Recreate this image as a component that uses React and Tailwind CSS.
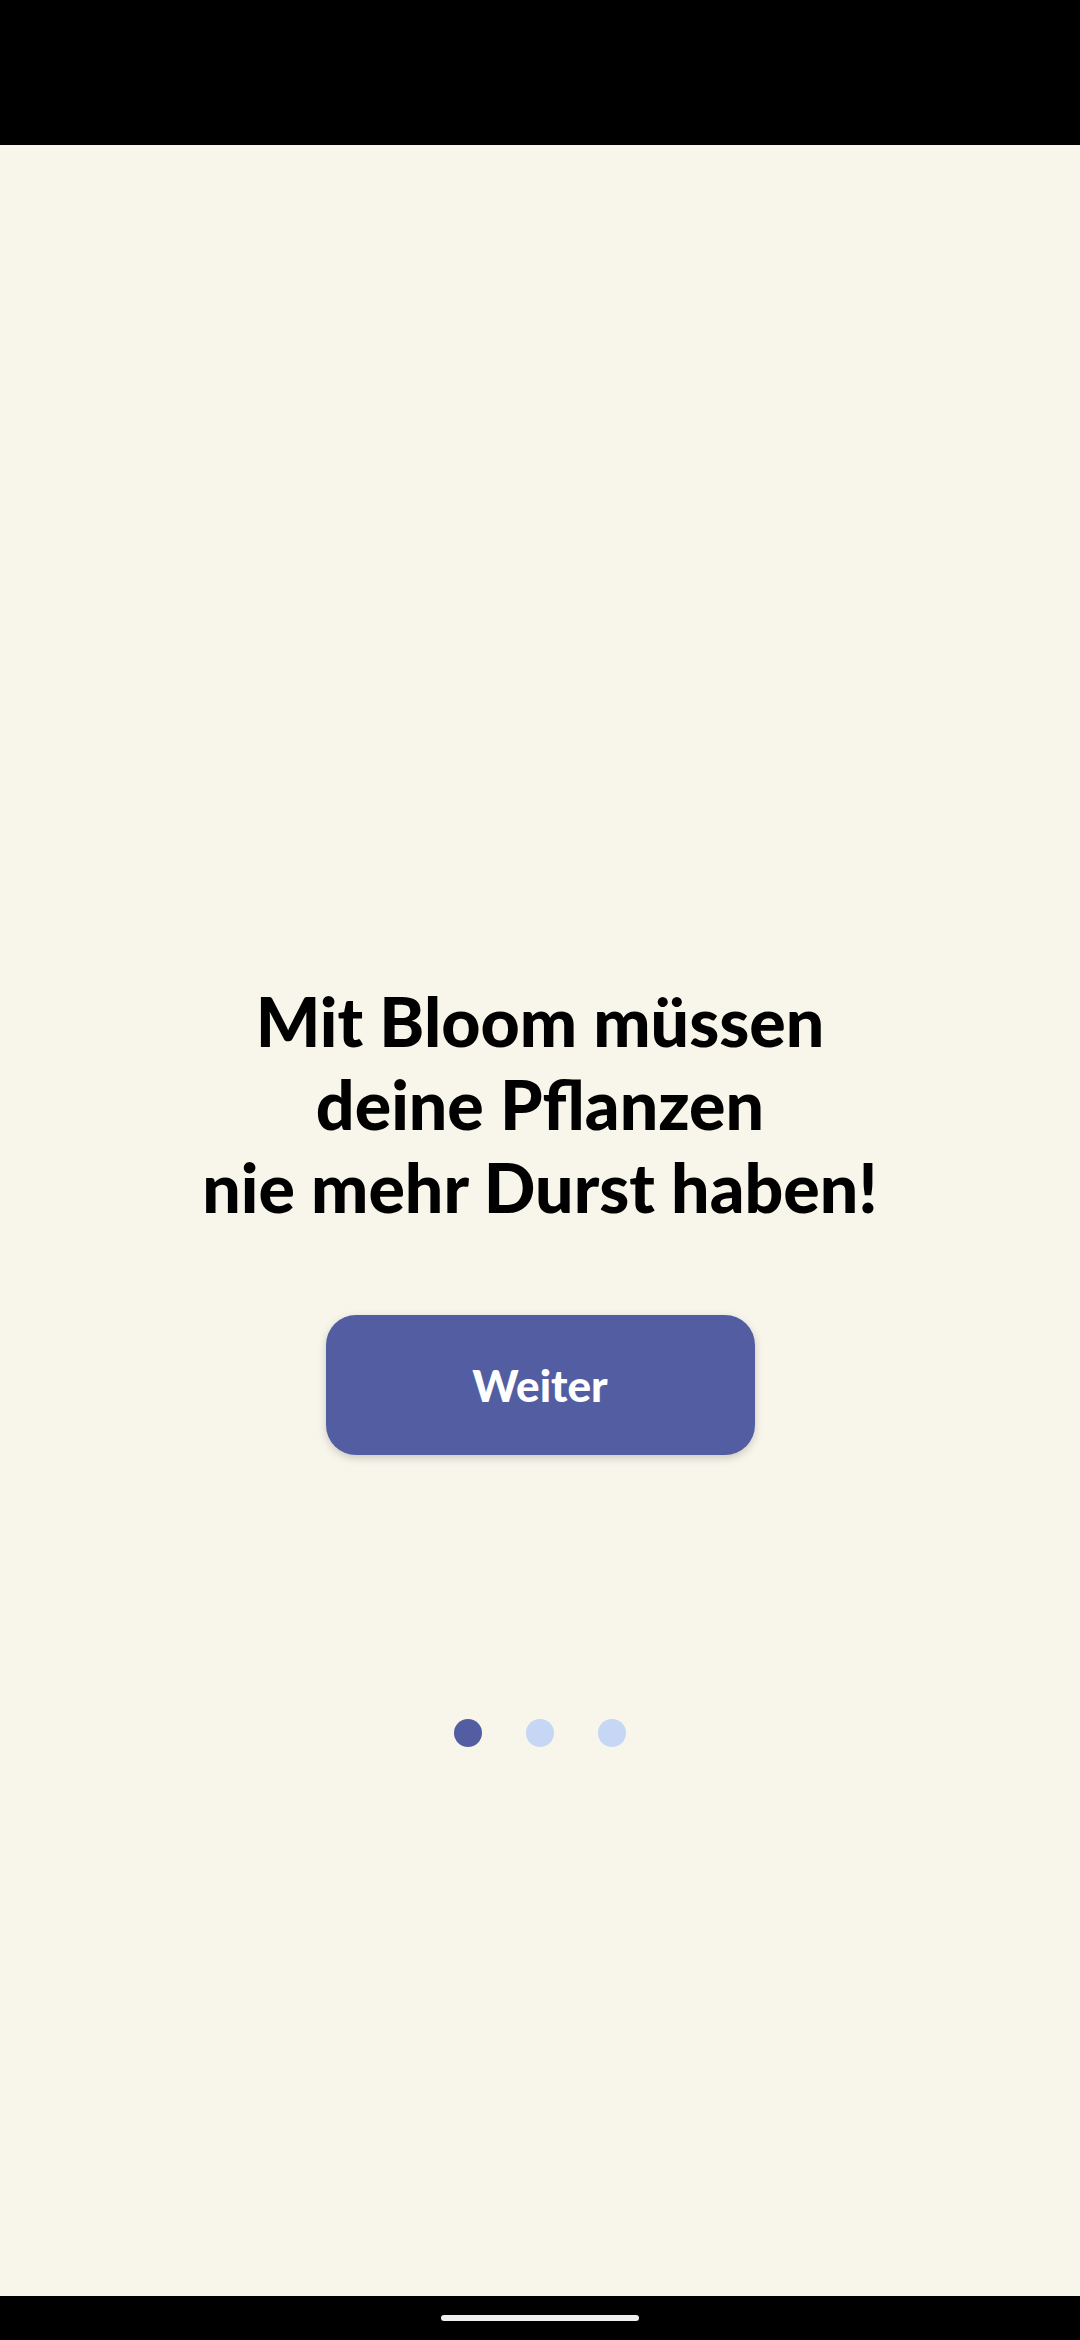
export default function App() {
  return (
    <div className="flex h-[2340px] w-[1080px] flex-col bg-black font-['Lato',sans-serif]">
      <div className="h-[145px] shrink-0 bg-black" />

      <main className="flex flex-1 flex-col items-center bg-[#f8f6eb] pt-[834px]">
        <h1 className="text-center text-[68px] font-black leading-[83px] text-black">
          Mit Bloom müssen
          <br />
          deine Pflanzen
          <br />
          nie mehr Durst haben!
        </h1>

        <button className="mt-[87px] flex h-[140px] w-[429px] items-center justify-center rounded-[30px] bg-[#535ea2] text-[44px] font-black text-white shadow-[0_3px_8px_rgba(0,0,0,0.18)]">
          Weiter
        </button>

        <div className="mt-[264px] flex gap-[44px]">
          <span className="h-[28px] w-[28px] rounded-full bg-[#535ea2]" />
          <span className="h-[28px] w-[28px] rounded-full bg-[#c5d7f5]" />
          <span className="h-[28px] w-[28px] rounded-full bg-[#c5d7f5]" />
        </div>
      </main>

      <div className="flex h-[44px] shrink-0 items-center justify-center bg-black">
        <div className="h-[6px] w-[198px] rounded-full bg-[#eeeeee]" />
      </div>
    </div>
  );
}
